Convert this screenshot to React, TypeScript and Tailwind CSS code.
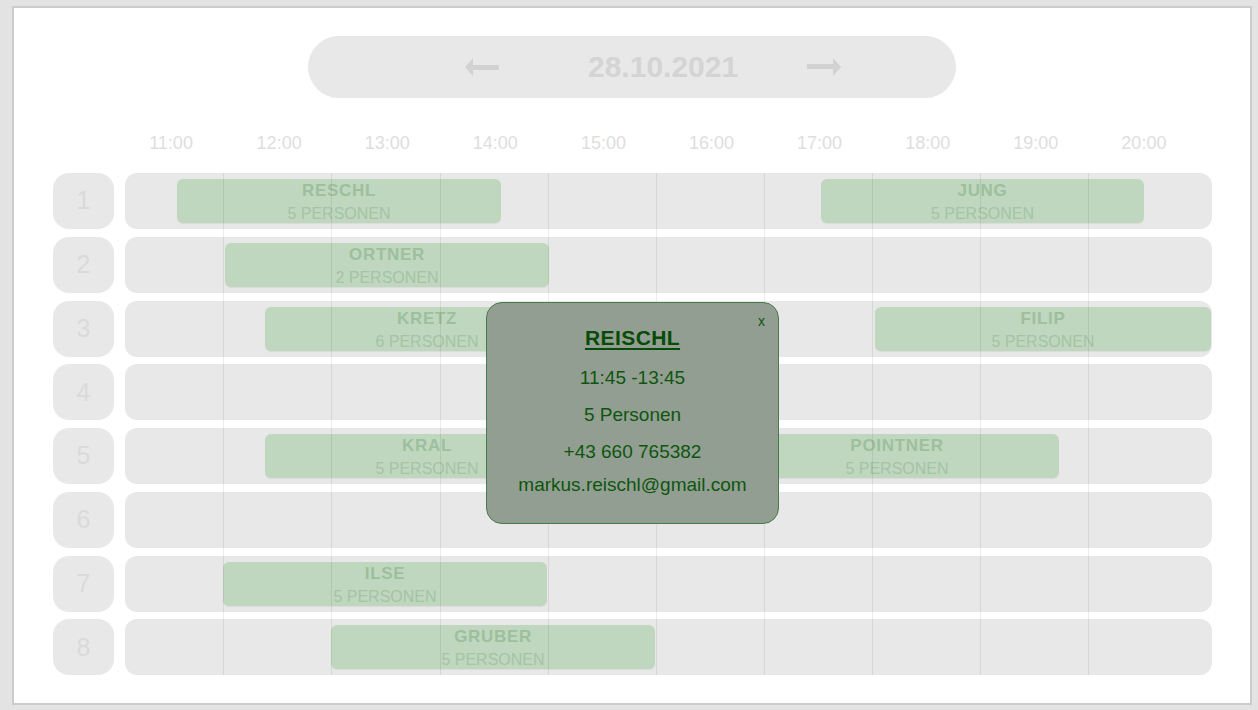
import React from "react";

type Booking = { name: string; persons: number; pos: string };

const hours = ["11:00", "12:00", "13:00", "14:00", "15:00", "16:00", "17:00", "18:00", "19:00", "20:00"];

const rows: Booking[][] = [
  [
    { name: "RESCHL", persons: 5, pos: "left-[52px] w-[324px]" },
    { name: "JUNG", persons: 5, pos: "left-[696px] w-[323px]" },
  ],
  [{ name: "ORTNER", persons: 2, pos: "left-[100px] w-[324px]" }],
  [
    { name: "KRETZ", persons: 6, pos: "left-[140px] w-[324px]" },
    { name: "FILIP", persons: 5, pos: "left-[750px] w-[336px]" },
  ],
  [],
  [
    { name: "KRAL", persons: 5, pos: "left-[140px] w-[324px]" },
    { name: "POINTNER", persons: 5, pos: "left-[610px] w-[324px]" },
  ],
  [],
  [{ name: "ILSE", persons: 5, pos: "left-[98px] w-[324px]" }],
  [{ name: "GRUBER", persons: 5, pos: "left-[206px] w-[324px]" }],
];

const lines = [
  "left-[209px]",
  "left-[317px]",
  "left-[426px]",
  "left-[534px]",
  "left-[642px]",
  "left-[750px]",
  "left-[858px]",
  "left-[966px]",
  "left-[1074px]",
];

function Arrow({ flip }: { flip?: boolean }) {
  return (
    <svg width="34" height="20" viewBox="0 0 34 20" className={flip ? "rotate-180" : ""}>
      <polygon points="0,10 8,1 8,19" fill="#d2d2d2" />
      <rect x="7" y="8" width="27" height="5" fill="#d2d2d2" />
    </svg>
  );
}

export default function App() {
  return (
    <div className="h-[710px] bg-[#e3e3e3] pt-[6px] pl-[12px] font-['Liberation_Sans',Arial,sans-serif]">
      <div className="relative w-[1240px] h-[699px] border-2 border-[#cccccc] bg-white">
        {/* date switcher */}
        <div className="ml-[294px] mt-[28px] w-[648px] h-[62px] rounded-full bg-[#e8e8e8] flex items-center pl-[157px]">
          <Arrow />
          <div className="ml-[89px] text-[30px] font-bold text-[#d4d4d4] leading-none">28.10.2021</div>
          <div className="ml-[69px]">
            <Arrow flip />
          </div>
        </div>

        {/* hours */}
        <div className="mt-[33px] flex pl-[103px]">
          {hours.map((h) => (
            <div key={h} className="w-[108.1px] text-center text-[18px] leading-[24px] text-[#dedede]">
              {h}
            </div>
          ))}
        </div>

        {/* tables */}
        <div className="relative mt-[18px] pl-[39px] flex flex-col gap-[7.75px]">
          {rows.map((bookings, i) => (
            <div key={i} className="flex gap-[11px]">
              <div className="w-[61px] h-[56px] rounded-2xl bg-[#e8e8e8] flex items-center justify-center text-[25px] font-light text-[#dadada]">
                {i + 1}
              </div>
              <div className="relative w-[1087px] h-[56px] rounded-xl bg-[#e8e8e8]">
                {bookings.map((b) => (
                  <div
                    key={b.name}
                    className={`absolute top-[6px] h-[44px] rounded-md bg-[#bfd7bf] shadow-[0_1px_1px_rgba(0,0,0,0.06)] flex flex-col items-center ${b.pos}`}
                  >
                    <div className="text-[17px] leading-[24px] font-black tracking-[0.04em] text-[#9dbf9d]">{b.name}</div>
                    <div className="text-[16px] leading-[22px] text-[#a5c3a5]">{b.persons} PERSONEN</div>
                  </div>
                ))}
              </div>
            </div>
          ))}
          {lines.map((l) => (
            <div key={l} className={`absolute top-0 bottom-0 w-px bg-black/[0.07] ${l}`} />
          ))}
        </div>

        {/* popup */}
        <div className="absolute left-[472px] top-[294px] w-[293px] h-[222px] rounded-2xl border border-[#4a7a4a] bg-[#939e93] flex flex-col items-center pt-[23px] text-[#0e560e]">
          <div className="absolute right-[13px] top-[10px] text-[14px] leading-[16px]">x</div>
          <div className="text-[21px] leading-[24px] font-black tracking-[0.02em] underline underline-offset-[3px] decoration-2 text-[#064b06]">
            REISCHL
          </div>
          <div className="mt-[16px] text-[19px] leading-[24px]">11:45 -13:45</div>
          <div className="mt-[13px] text-[19px] leading-[24px]">5 Personen</div>
          <div className="mt-[13px] text-[19px] leading-[24px]">+43 660 765382</div>
          <div className="mt-[9px] text-[19px] leading-[24px]">markus.reischl@gmail.com</div>
        </div>
      </div>
    </div>
  );
}
